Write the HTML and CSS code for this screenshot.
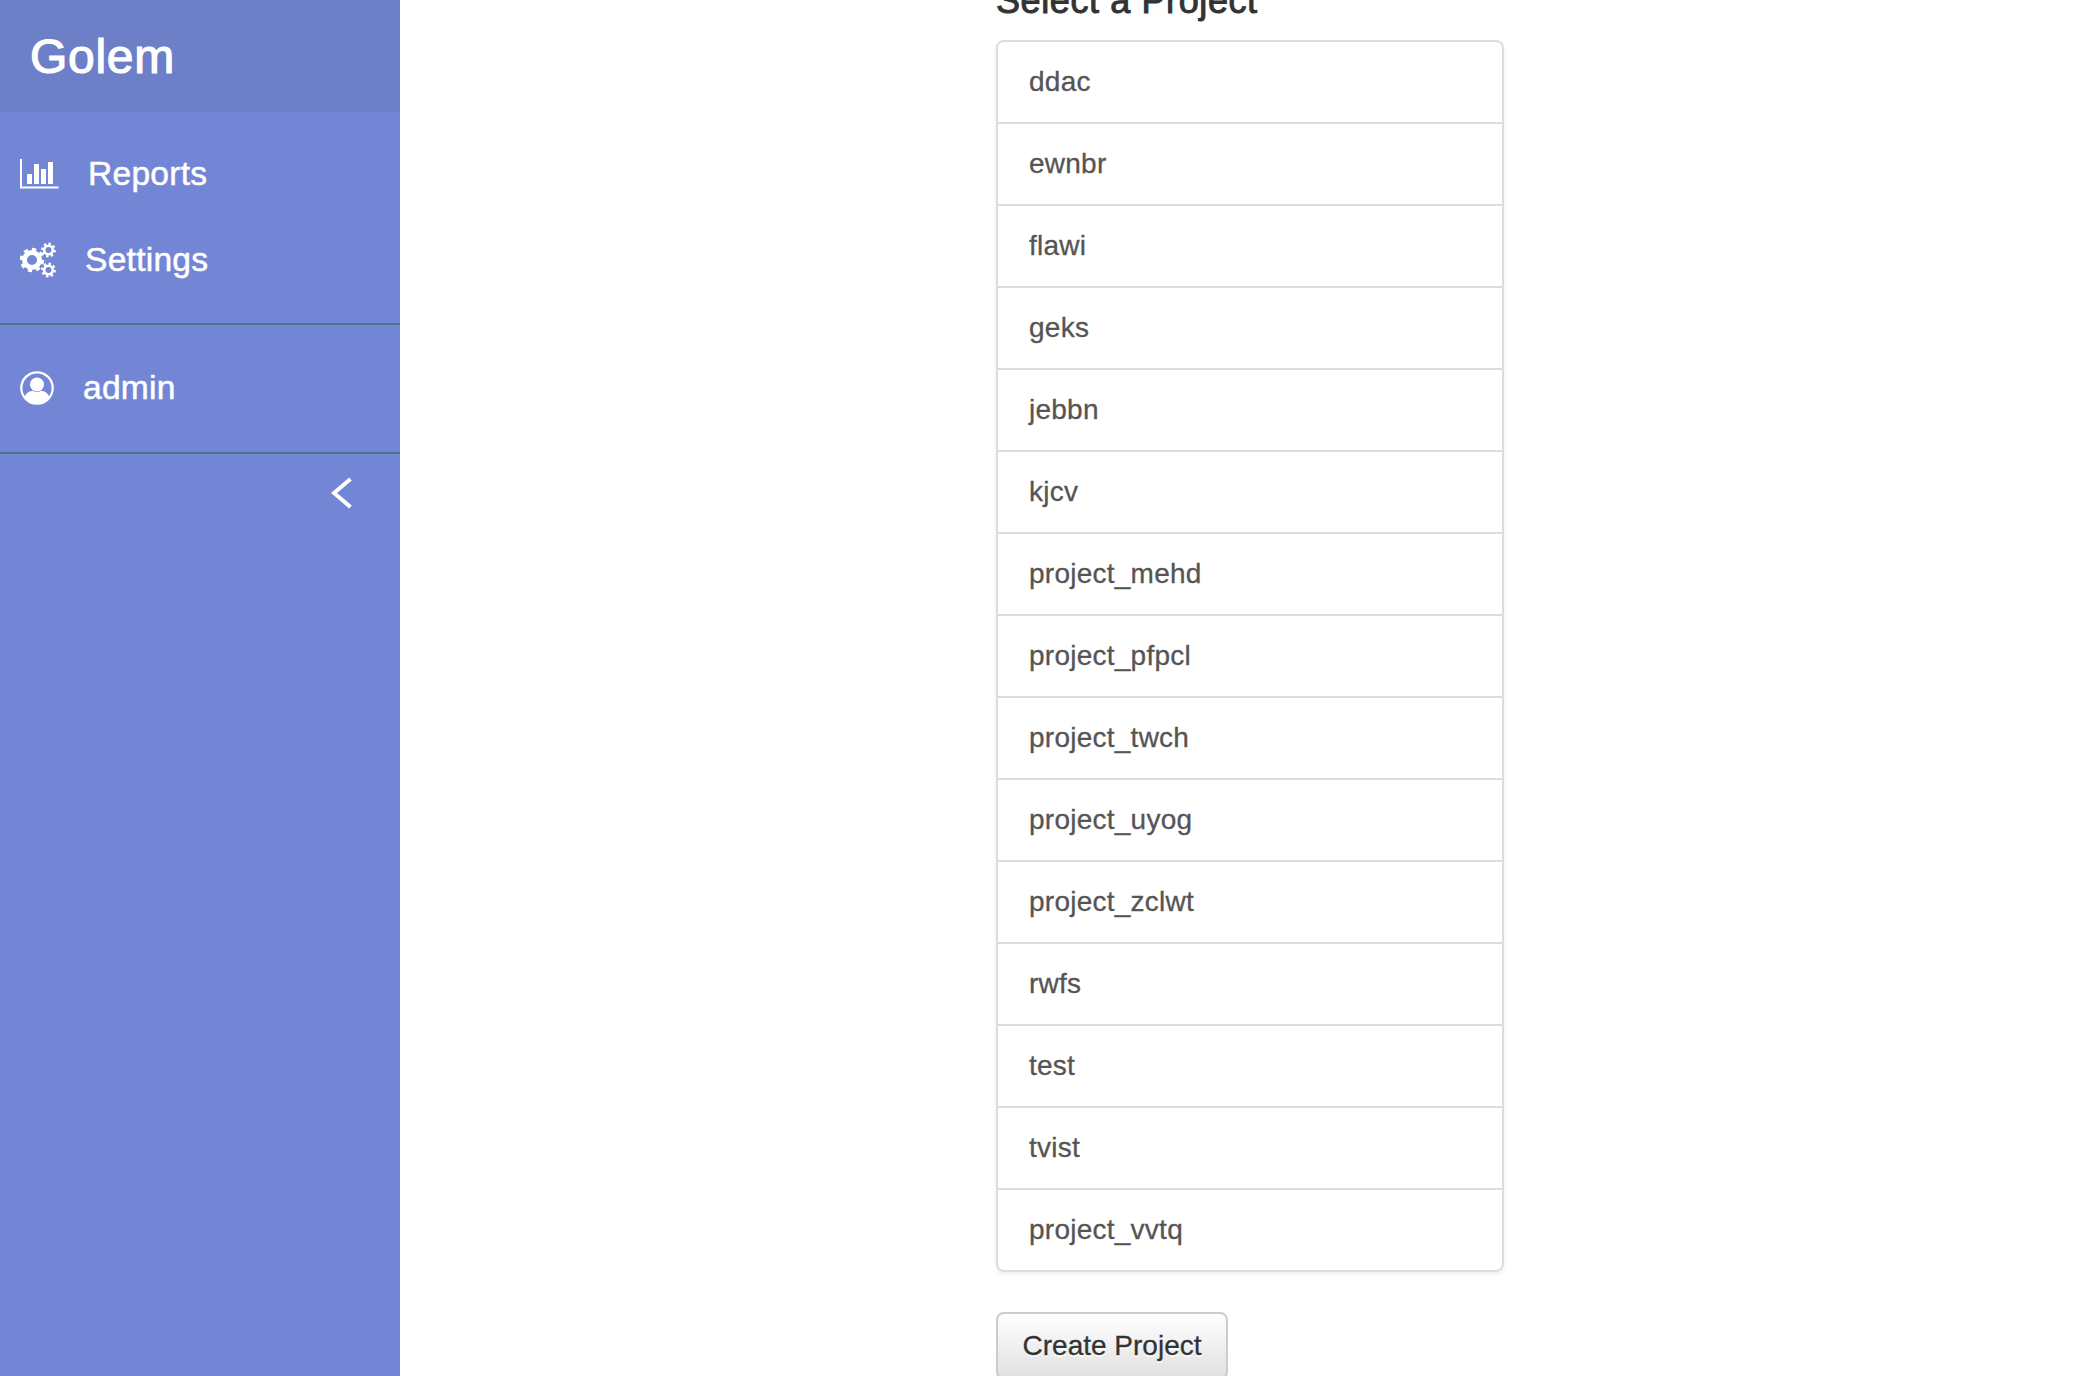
FILE: index.html
```html
<!DOCTYPE html>
<html lang="en">
<head>
<meta charset="utf-8">
<title>Golem</title>
<link rel="stylesheet" href="styles.css">
</head>
<body>
<div class="app">
  <nav class="sidebar">
    <div class="brand">Golem</div>
    <ul class="menu menu-main">
      <li class="menu-item">
        <svg class="icon icon-reports" viewBox="0 0 39 30"><path d="M1 0V28.5H38.5" fill="none" stroke="#fff" stroke-width="2"/><rect x="7" y="15" width="5" height="10" fill="#fff"/><rect x="14" y="5" width="5" height="20" fill="#fff"/><rect x="21" y="10" width="5" height="15" fill="#fff"/><rect x="28" y="3" width="5" height="22" fill="#fff"/></svg>
        <span>Reports</span>
      </li>
      <li class="menu-item">
        <svg class="icon icon-settings" viewBox="0 0 36 36">
          <g fill="none" stroke="#fff">
            <circle cx="12" cy="18" r="7.500" stroke-width="5"/>
            <circle cx="12" cy="18" r="10.500" stroke-width="3.500" pathLength="16" stroke-dasharray="1 1"/>
            <circle cx="28.500" cy="8" r="4.300" stroke-width="2.600"/>
            <circle cx="28.500" cy="8" r="6.300" stroke-width="2.200" pathLength="16" stroke-dasharray="1 1"/>
            <circle cx="28.500" cy="28" r="4.300" stroke-width="2.600"/>
            <circle cx="28.500" cy="28" r="6.300" stroke-width="2.200" pathLength="16" stroke-dasharray="1 1"/>
          </g>
        </svg>
        <span>Settings</span>
      </li>
    </ul>
    <ul class="menu menu-user">
      <li class="menu-item">
        <svg class="icon icon-user" viewBox="0 0 34 34"><circle cx="17" cy="17" r="15.700" fill="none" stroke="#fff" stroke-width="2.200"/><circle cx="17" cy="13.500" r="7" fill="#fff"/><path d="M4.500 26C6.500 21.500 10 20 13 19.800C15 21.500 19 21.500 21 19.800C24 20 27.500 21.500 29.500 26C26.500 30 22 32 17 32C12 32 7.500 30 4.500 26Z" fill="#fff"/></svg>
        <span>admin</span>
      </li>
    </ul>
    <div class="collapse">
      <svg class="chevron" viewBox="0 0 22 32"><path d="M19.500 2L3 16L19.500 30" fill="none" stroke="#fff" stroke-width="4"/></svg>
    </div>
  </nav>
  <main class="content">
    <h3 class="title">Select a Project</h3>
    <ul class="list">
      <li class="list-item">ddac</li>
      <li class="list-item">ewnbr</li>
      <li class="list-item">flawi</li>
      <li class="list-item">geks</li>
      <li class="list-item">jebbn</li>
      <li class="list-item">kjcv</li>
      <li class="list-item">project_mehd</li>
      <li class="list-item">project_pfpcl</li>
      <li class="list-item">project_twch</li>
      <li class="list-item">project_uyog</li>
      <li class="list-item">project_zclwt</li>
      <li class="list-item">rwfs</li>
      <li class="list-item">test</li>
      <li class="list-item">tvist</li>
      <li class="list-item">project_vvtq</li>
    </ul>
    <button class="btn" type="button">Create Project</button>
  </main>
</div>
</body>
</html>
```

FILE: styles.css
```css
html, body {
  margin: 0;
  height: 100%;
  overflow: hidden;
  background: #fff;
  font-family: "Liberation Sans", Arial, sans-serif;
}

.app {
  display: flex;
  height: 1376px;
  overflow: hidden;
}

.sidebar {
  flex: 0 0 400px;
  background: #7386d5;
  color: #fff;
}

.brand {
  height: 112px;
  box-sizing: border-box;
  padding: 29px 30px 0;
  background: #6d7fc7;
  font-size: 48px;
  line-height: 56px;
  letter-spacing: 0.7px;
  -webkit-text-stroke: 1.2px #fff;
}

.menu {
  list-style: none;
  margin: 0;
  padding: 0;
  border-bottom: 2px solid #47748b;
}

.menu-main {
  padding: 19px 0 20px;
}

.menu-user {
  padding: 20px 0 21px;
}

.menu-item {
  display: flex;
  align-items: center;
  gap: 29px;
  height: 86px;
  padding-left: 20px;
  font-size: 33.600px;
  line-height: 40px;
  letter-spacing: 0.25px;
  -webkit-text-stroke: 0.5px #fff;
}

.icon {
  display: block;
  flex: none;
}

.icon-reports {
  width: 39px;
  height: 30px;
}

.icon-settings {
  width: 36px;
  height: 36px;
}

.icon-user {
  width: 34px;
  height: 34px;
}

.collapse {
  display: flex;
  justify-content: flex-end;
  padding: 23px 47px 0 0;
}

.chevron {
  display: block;
  width: 22px;
  height: 32px;
}

.content {
  flex: 1;
  padding-left: 596px;
  color: #333;
}

.title {
  margin: -20px 0 0;
  height: 60px;
  font-size: 36px;
  font-weight: 400;
  line-height: 42px;
  letter-spacing: 0.6px;
  -webkit-text-stroke: 1px #333;
}

.list {
  list-style: none;
  width: 508px;
  box-sizing: border-box;
  margin: 0 0 40px;
  padding: 0;
  border-radius: 8px;
  box-shadow: 0 2px 4px rgba(0, 0, 0, 0.075);
}

.list-item {
  margin-bottom: -2px;
  padding: 20px 30px 20px 31px;
  border: 2px solid #ddd;
  background: #fff;
  color: #555;
  font-size: 28px;
  line-height: 40px;
  letter-spacing: 0.25px;
  -webkit-text-stroke: 0.3px #555;
}

.list-item:first-child {
  border-radius: 8px 8px 0 0;
}

.list-item:last-child {
  margin-bottom: 0;
  border-radius: 0 0 8px 8px;
}

.btn {
  display: block;
  width: 232px;
  height: 68px;
  padding: 0;
  border: 2px solid #ccc;
  border-radius: 8px;
  background: linear-gradient(#fff, #e0e0e0);
  color: #333;
  font-family: inherit;
  font-size: 28px;
  line-height: 40px;
  white-space: nowrap;
  text-shadow: 0 2px 0 #fff;
  -webkit-text-stroke: 0.3px #333;
}
```
